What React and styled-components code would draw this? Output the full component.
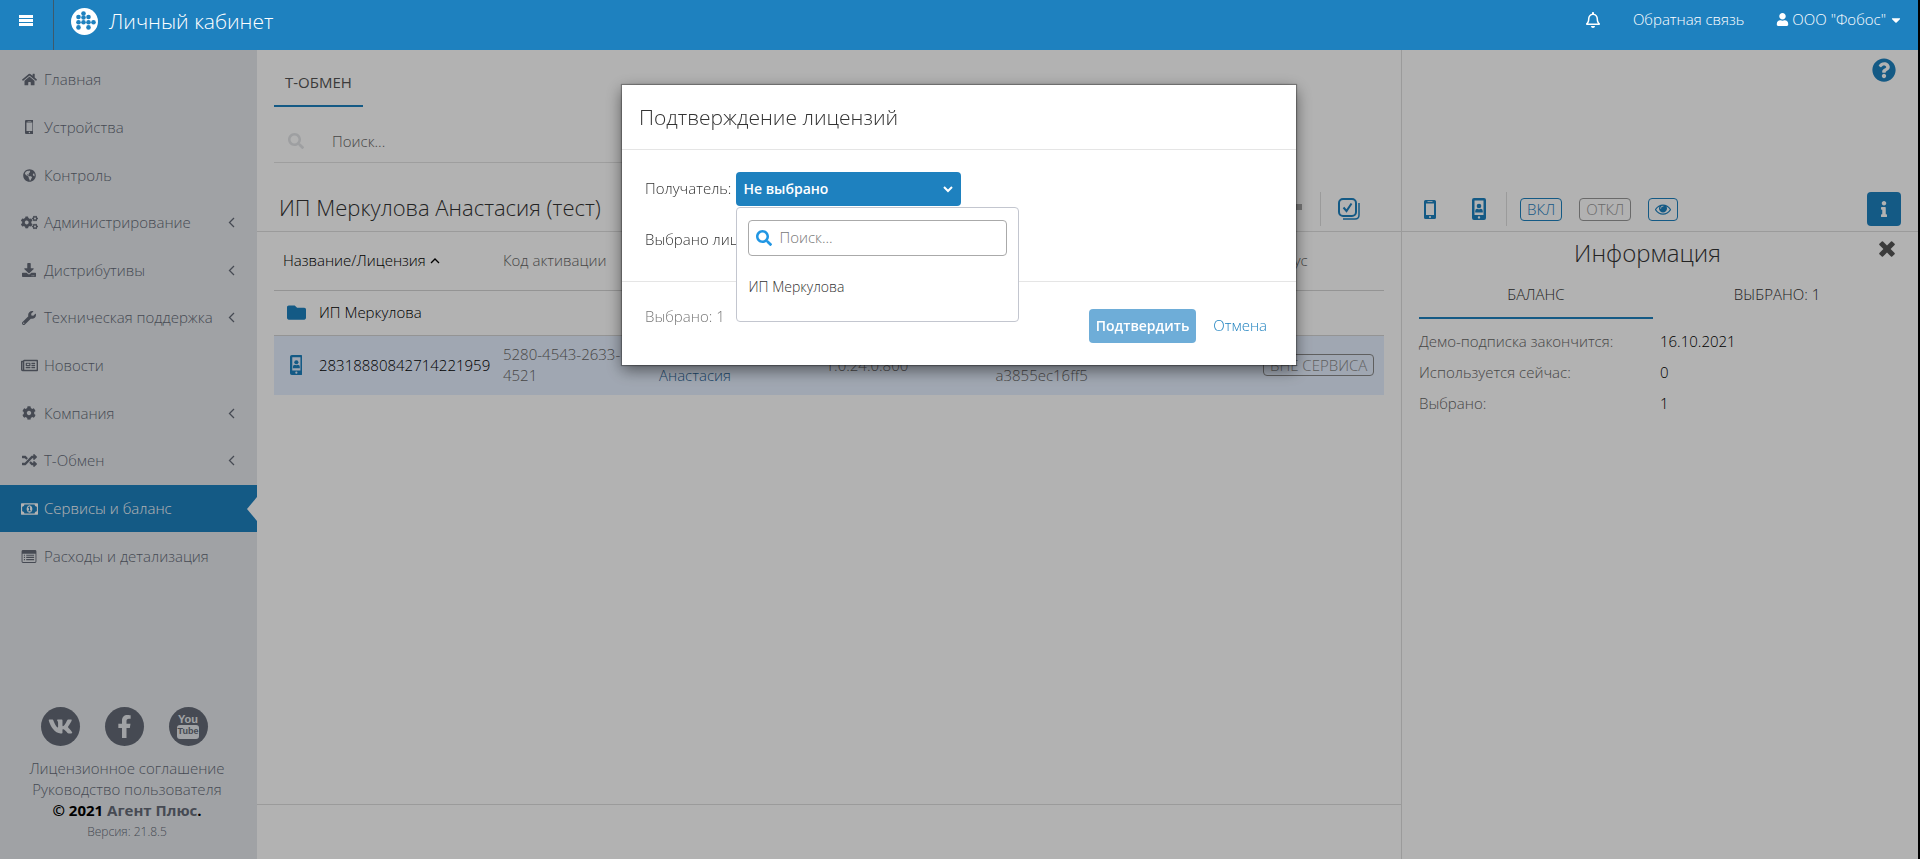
import React, { useState } from "react";
import styled, { createGlobalStyle } from "styled-components";
import {
  FaHome,
  FaGlobeAmericas,
  FaCogs,
  FaDownload,
  FaWrench,
  FaRegNewspaper,
  FaCog,
  FaRandom,
  FaSearch,
  FaUser,
  FaCaretDown,
  FaRegBell,
  FaQuestionCircle,
  FaInfo,
  FaFolder,
  FaVk,
  FaFacebookF,
} from "react-icons/fa";

const BarsIcon = () => (
  <svg width="14" height="12" viewBox="0 0 14 12" fill="currentColor">
    <rect width="14" height="3" />
    <rect y="4" width="14" height="3" />
    <rect y="8" width="14" height="3" />
  </svg>
);

const LogoIcon = () => (
  <svg width="27" height="27" viewBox="0 0 27 27">
    <circle cx="13.5" cy="13.5" r="13.5" fill="#fff" />
    <g fill="#1e81bf">
      {[
        [12.5, 5.5],
        [7.5, 9],
        [12.5, 9.5],
        [17.5, 9],
        [7.5, 14.2],
        [12.5, 14.2],
        [17.5, 14.2],
        [22.5, 14.2],
        [7.5, 19.4],
        [17.5, 19.4],
      ].map(([x, y]) => (
        <circle key={`${x}-${y}`} cx={x} cy={y} r="2.3" />
      ))}
    </g>
  </svg>
);

const angles = {
  left: "M6 1L1.500 5.500 6 10",
  up: "M1 7l4-4 4 4",
  down: "M1 3l4 4 4-4",
};

const Angle = ({ to, weight = 1.3 }) => (
  <svg
    width={to === "left" ? 7 : 10}
    height={to === "left" ? 11 : 10}
    fill="none"
    stroke="currentColor"
    strokeWidth={weight}
  >
    <path d={angles[to]} />
  </svg>
);

const MoneyIcon = () => (
  <svg width="17" height="16" viewBox="128 0 1920 1792" fill="currentColor">
    <path d="M896 1152h384v-96h-128v-448h-114l-148 137 77 80q42-37 55-57h2v288h-128v96zm512-256q0 70-21 142t-59.5 134-101.5 101-138 39-138-39-101.5-101-59.5-134-21-142 21-142 59.5-134 101.5-101 138-39 138 39 101.5 101 59.5 134 21 142zm512 256v-512q-106 0-181-75t-75-181h-1152q0 106-75 181t-181 75v512q106 0 181 75t75 181h1152q0-106 75-181t181-75zm128-832v1152q0 26-19 45t-45 19h-1792q-26 0-45-19t-19-45v-1152q0-26 19-45t45-19h1792q26 0 45 19t19 45z" />
  </svg>
);

const ListIcon = () => (
  <svg width="16" height="13" viewBox="0 0 16 14" fill="currentColor">
    <path
      fillRule="evenodd"
      d="M1.5 0h13Q16 0 16 1.500v11Q16 14 14.500 14h-13Q0 14 0 12.500v-11Q0 0 1.500 0zM1 4v8.500q0 .5.5.5h13q.5 0 .5-.5V4z"
    />
    <path d="M2.500 5h1.200v1.200H2.500zM5 5h8.500v1.200H5zM2.500 7.400h1.200v1.200H2.500zM5 7.400h8.500v1.200H5zM2.500 9.800h1.200V11H2.500zM5 9.800h8.500V11H5z" />
  </svg>
);

const EyeIcon = () => (
  <svg width="16" height="16" viewBox="0 0 1792 1792" fill="currentColor">
    <path d="M1664 960q-152-236-381-353 61 104 61 225 0 185-131.5 316.5t-316.5 131.5-316.5-131.5-131.5-316.5q0-121 61-225-229 117-381 353 133 205 333.5 326.5t434.5 121.5 434.5-121.5 333.5-326.5zm-720-384q0-20-14-34t-34-14q-125 0-214.5 89.5t-89.5 214.5q0 20 14 34t34 14 34-14 14-34q0-86 61-147t147-61q20 0 34-14t14-34zm848 384q0 34-20 69-140 230-376.5 368.5t-499.5 138.5-499.5-139-376.5-368q-20-35-20-69t20-69q140-229 376.5-368t499.5-139 499.5 139 376.5 368q20 35 20 69z" />
  </svg>
);

const PhoneIcon = ({ height = 19 }) => (
  <svg height={height} viewBox="0 0 12 19" fill="currentColor">
    <path
      fillRule="evenodd"
      d="M1.500 0h9Q12 0 12 1.500v16q0 1.500-1.500 1.500h-9Q0 19 0 17.500v-16Q0 0 1.500 0zM2 3.500V15h8V3.500zM3.500 1.300v.8h5v-.8zM6 16a1 1 0 1 0 0 2 1 1 0 1 0 0-2z"
    />
  </svg>
);

const PhoneUserIcon = ({ height = 22 }) => (
  <svg height={height} viewBox="0 0 14 22" fill="currentColor">
    <path
      fillRule="evenodd"
      d="M2 0h10q2 0 2 2v18q0 2-2 2H2q-2 0-2-2V2Q0 0 2 0zM2.500 2.500V17h9V2.500zM7 18.200a1.200 1.200 0 1 0 0 2.400 1.200 1.200 0 1 0 0-2.400z"
    />
    <circle cx="7" cy="8" r="2.300" />
    <path d="M3.200 14.500v-1.500q0-2.300 2.300-2.300 1.500 1 3 0 2.300 0 2.300 2.300v1.500z" />
  </svg>
);

const SelectAllIcon = () => (
  <svg width="22" height="22" viewBox="0 0 22 22" fill="none" stroke="currentColor">
    <rect x="1" y="1" width="17" height="17" rx="4" strokeWidth="2" />
    <path d="M5.500 9.500l3 3.500 5-7.500" strokeWidth="2" />
    <path d="M5 21h12q4 0 4-4V5" strokeWidth="1.500" />
  </svg>
);

const CloseIcon = () => (
  <svg width="16" height="16" viewBox="0 0 16 16" fill="currentColor">
    <path d="M4 .4L8 4.400 12 .4q.6-.5 1.200 0l2.400 2.400q.5.600 0 1.200l-4 4 4 4q.5.600 0 1.200l-2.400 2.400q-.6.500-1.200 0l-4-4-4 4q-.6.500-1.200 0L.4 13.200q-.5-.6 0-1.200l4-4-4-4q-.5-.6 0-1.200L2.800.4q.6-.5 1.200 0z" />
  </svg>
);

const menu = [
  { label: "Главная", icon: <FaHome size={15} /> },
  { label: "Устройства", icon: <PhoneIcon height={14} /> },
  { label: "Контроль", icon: <FaGlobeAmericas size={13} /> },
  { label: "Администрирование", icon: <FaCogs size={17} />, nested: true },
  { label: "Дистрибутивы", icon: <FaDownload size={14} />, nested: true },
  { label: "Техническая поддержка", icon: <FaWrench size={14} />, nested: true },
  { label: "Новости", icon: <FaRegNewspaper size={17} /> },
  { label: "Компания", icon: <FaCog size={14} />, nested: true },
  { label: "Т-Обмен", icon: <FaRandom size={15} />, nested: true },
  { label: "Сервисы и баланс", icon: <MoneyIcon />, active: true },
  { label: "Расходы и детализация", icon: <ListIcon /> },
];

const balance = [
  ["Демо-подписка закончится:", "16.10.2021"],
  ["Используется сейчас:", "0"],
  ["Выбрано:", "1"],
];

function Sidebar() {
  return (
    <Aside>
      <Menu>
        {menu.map(({ label, icon, nested, active }) => (
          <MenuItem key={label} href="#" $active={active}>
            <MenuIcon>{icon}</MenuIcon>
            <span>{label}</span>
            {nested && <Angle to="left" />}
          </MenuItem>
        ))}
      </Menu>
      <AsideFooter>
        <Socials>
          <Social href="#" aria-label="ВКонтакте">
            <FaVk size={25} />
          </Social>
          <Social href="#" aria-label="Facebook">
            <FaFacebookF size={23} />
          </Social>
          <Social href="#">
            <span>You</span>
            <Tube>Tube</Tube>
          </Social>
        </Socials>
        <a href="#">Лицензионное соглашение</a>
        <a href="#">Руководство пользователя</a>
        <Copyright>
          © 2021 <a href="#">Агент Плюс</a>.
        </Copyright>
        <Version>Версия: 21.8.5</Version>
      </AsideFooter>
    </Aside>
  );
}

function Licenses() {
  return (
    <Main>
      <Top>
        <Tab>Т-ОБМЕН</Tab>
        <SearchRow>
          <FaSearch />
          <input type="text" placeholder="Поиск..." aria-label="Поиск" />
        </SearchRow>
      </Top>
      <TitleBar>
        <Title>ИП Меркулова Анастасия (тест)</Title>
        <Dash />
        <Divider />
        <IconButton aria-label="Выбрать все">
          <SelectAllIcon />
        </IconButton>
      </TitleBar>
      <TableWrap>
        <Table>
          <colgroup>
            <Col $width="220px" />
            <Col $width="156px" />
            <Col $width="15%" />
            <Col $width="170px" />
            <Col />
            <Col $width="130px" />
          </colgroup>
          <thead>
            <tr>
              <Th $sorted>
                Название/Лицензия <Angle to="up" />
              </Th>
              <Th>Код активации</Th>
              <Th>Клиент</Th>
              <Th>Версия</Th>
              <Th>Устройство</Th>
              <Th>Статус</Th>
            </tr>
          </thead>
          <tbody>
            <tr>
              <Td colSpan={6}>
                <Name>
                  <FaFolder size={19} />
                  ИП Меркулова
                </Name>
              </Td>
            </tr>
            <SelectedRow>
              <Td>
                <Name>
                  <PhoneUserIcon height={20} />
                  28318880842714221959
                </Name>
              </Td>
              <Td>5280-4543-2633-4521</Td>
              <Td>
                <a href="#">
                  Меркулова
                  <br />
                  Анастасия
                </a>
              </Td>
              <Td>1.0.24.0.800</Td>
              <Td>
                97b1-4c02-
                <br />
                a3855ec16ff5
              </Td>
              <Td>
                <Badge>ВНЕ СЕРВИСА</Badge>
              </Td>
            </SelectedRow>
          </tbody>
        </Table>
      </TableWrap>
      <BottomBar />
    </Main>
  );
}

function InfoPanel() {
  return (
    <Panel>
      <HelpRow>
        <IconButton aria-label="Помощь">
          <FaQuestionCircle size={24} />
        </IconButton>
      </HelpRow>
      <PanelTools>
        <IconButton aria-label="Устройство">
          <PhoneIcon />
        </IconButton>
        <IconButton aria-label="Пользователь устройства">
          <PhoneUserIcon />
        </IconButton>
        <Divider />
        <Outlined>ВКЛ</Outlined>
        <Outlined disabled>ОТКЛ</Outlined>
        <Outlined aria-label="Показать">
          <EyeIcon />
        </Outlined>
        <InfoButton aria-label="Информация">
          <FaInfo size={16} />
        </InfoButton>
      </PanelTools>
      <PanelHead>
        <h2>Информация</h2>
        <CloseButton aria-label="Закрыть">
          <CloseIcon />
        </CloseButton>
      </PanelHead>
      <PanelTabs>
        <PanelTab $active>БАЛАНС</PanelTab>
        <PanelTab>ВЫБРАНО: 1</PanelTab>
      </PanelTabs>
      <Balance>
        {balance.map(([name, value]) => (
          <React.Fragment key={name}>
            <dt>{name}</dt>
            <dd>{value}</dd>
          </React.Fragment>
        ))}
      </Balance>
    </Panel>
  );
}

function ConfirmModal() {
  const [open, setOpen] = useState(true);
  const [query, setQuery] = useState("");

  return (
    <Overlay>
      <Modal role="dialog" aria-labelledby="modal-title">
        <ModalHeader id="modal-title">Подтверждение лицензий</ModalHeader>
        <ModalBody>
          <Field>
            <span>Получатель:</span>
            <Picker>
              <PickerButton onClick={() => setOpen(!open)}>
                Не выбрано <Angle to="down" weight={2} />
              </PickerButton>
              {open && (
                <Dropdown>
                  <DropdownSearch>
                    <FaSearch />
                    <input
                      type="text"
                      placeholder="Поиск..."
                      aria-label="Поиск получателя"
                      value={query}
                      onChange={(e) => setQuery(e.target.value)}
                    />
                  </DropdownSearch>
                  <Option>ИП Меркулова</Option>
                </Dropdown>
              )}
            </Picker>
          </Field>
          <Field>Выбрано лицензий: 1</Field>
        </ModalBody>
        <ModalFooter>
          <Count>Выбрано: 1</Count>
          <Confirm>Подтвердить</Confirm>
          <Cancel>Отмена</Cancel>
        </ModalFooter>
      </Modal>
    </Overlay>
  );
}

function App() {
  return (
    <Page>
      <GlobalStyle />
      <Header>
        <MenuButton aria-label="Меню">
          <BarsIcon />
        </MenuButton>
        <Brand href="#">
          <LogoIcon />
          Личный кабинет
        </Brand>
        <HeaderRight>
          <HeaderButton aria-label="Уведомления">
            <FaRegBell size={16} />
          </HeaderButton>
          <a href="#">Обратная связь</a>
          <HeaderButton>
            <FaUser size={13} />
            <span>ООО "Фобос"</span>
            <FaCaretDown size={14} />
          </HeaderButton>
        </HeaderRight>
      </Header>
      <Body>
        <Sidebar />
        <Licenses />
        <InfoPanel />
      </Body>
      <ConfirmModal />
    </Page>
  );
}

export default App;

const GlobalStyle = createGlobalStyle`
  * {
    box-sizing: border-box;
  }
  body {
    margin: 0;
    font-family: "Open Sans", sans-serif;
    font-size: 15px;
    font-weight: 300;
    line-height: 21px;
    color: #333;
    background: #fff;
  }
  button,
  input {
    font: inherit;
    color: inherit;
    border: none;
    background: none;
    padding: 0;
    outline: none;
  }
  button {
    cursor: pointer;
  }
  a {
    color: inherit;
    text-decoration: none;
  }
`;

const Page = styled.div`
  display: flex;
  flex-direction: column;
  min-height: 100vh;
  border-right: 2px solid #000;
`;

const Header = styled.header`
  display: flex;
  height: 50px;
  position: relative;
  z-index: 2;
  color: #fff;
  background: #1e81bf;
`;

const MenuButton = styled.button`
  display: flex;
  justify-content: center;
  width: 54px;
  padding: 15px 2px 0 0;
  border-right: 1px solid #3d5a6c;
`;

const Brand = styled.a`
  display: flex;
  align-items: center;
  gap: 11px;
  height: 43px;
  padding-left: 17px;
  font-size: 21px;
`;

const HeaderRight = styled.div`
  display: flex;
  align-items: center;
  gap: 32px;
  height: 39px;
  margin-left: auto;
  padding-right: 15px;
`;

const HeaderButton = styled.button`
  display: flex;
  align-items: center;
  gap: 3px;
`;

const Body = styled.div`
  flex: 1;
  display: grid;
  grid-template-columns: 257px minmax(0, 1fr) 517px;
`;

const Aside = styled.aside`
  display: flex;
  flex-direction: column;
  justify-content: space-between;
  color: #656b78;
  background: #e6e9ed;
`;

const Menu = styled.nav`
  display: grid;
  grid-auto-rows: 1fr;
  height: 524px;
  margin-top: 6px;
`;

const MenuItem = styled.a`
  display: flex;
  align-items: center;
  position: relative;
  padding: 0 22px 0 20px;
  color: ${(props) => (props.$active ? "#fff" : "#656b78")};
  background: ${(props) => (props.$active ? "#1e81bf" : "transparent")};

  > svg {
    margin-left: auto;
  }

  &::after {
    content: "";
    display: ${(props) => (props.$active ? "block" : "none")};
    position: absolute;
    right: 0;
    border: 12px solid transparent;
    border-width: 12px 10px 12px 0;
    border-right-color: #fff;
  }
`;

const MenuIcon = styled.span`
  display: flex;
  justify-content: center;
  width: 18px;
  margin-right: 6px;
`;

const AsideFooter = styled.footer`
  display: flex;
  flex-direction: column;
  align-items: center;
  padding: 0 3px 16px 0;
`;

const Socials = styled.div`
  display: flex;
  gap: 25px;
  margin: 0 6px 12px 0;
`;

const Social = styled.a`
  display: flex;
  flex-direction: column;
  align-items: center;
  justify-content: center;
  width: 39px;
  height: 39px;
  border-radius: 50%;
  color: #e6e9ed;
  background: #656b78;
  font: bold 11px/11px "Liberation Sans Narrow", sans-serif;
`;

const Tube = styled.span`
  padding: 1px 1px 2px;
  border-radius: 3px;
  font-size: 9px;
  color: #656b78;
  background: #e6e9ed;
`;

const Copyright = styled.div`
  font-weight: 700;
  color: #000;

  a {
    color: #656b78;
  }
`;

const Version = styled.div`
  font-size: 12px;
  line-height: 22px;
`;

const Main = styled.main`
  display: flex;
  flex-direction: column;
`;

const Top = styled.div`
  height: 113px;
  padding: 10px 17px 0;
`;

const Tab = styled.button`
  padding: 12px 11px 12px;
  border-bottom: 2px solid #1e81bf;
  font-weight: 400;
  color: #555;
`;

const SearchRow = styled.label`
  display: flex;
  align-items: center;
  gap: 28px;
  width: 60%;
  height: 43px;
  margin-top: 13px;
  padding-left: 14px;
  border-bottom: 1px solid #e2e2e2;
  color: #e2e4e7;

  svg {
    width: 16px;
    height: 16px;
  }
  input {
    flex: 1;
    color: #333;
  }
  input::placeholder {
    color: #666;
    opacity: 1;
  }
`;

const TitleBar = styled.div`
  display: flex;
  align-items: center;
  height: 69px;
  padding: 24px 41px 0 22px;
  border-bottom: 1px solid #dfdfdf;
`;

const Title = styled.h1`
  margin: 0 auto 0 0;
  padding-bottom: 4px;
  font-size: 22px;
  line-height: 30px;
  font-weight: 300;
`;

const Dash = styled.span`
  width: 16px;
  height: 6px;
  margin-bottom: 4px;
  background: #aaa;
`;

const Divider = styled.span`
  width: 1px;
  height: 34px;
  margin: 0 0 0 18px;
  background: #dfdfdf;
`;

const IconButton = styled.button`
  display: flex;
  margin-left: 17px;
  color: #1e81bf;
`;

const TableWrap = styled.div`
  flex: 1;
  padding: 0 17px;
`;

const Table = styled.table`
  width: 100%;
  table-layout: fixed;
  border-collapse: collapse;
`;

const Col = styled.col`
  width: ${(props) => props.$width || "auto"};
`;

const Th = styled.th`
  height: 58px;
  padding: 0 9px;
  text-align: left;
  font-weight: 300;
  white-space: nowrap;
  color: ${(props) => (props.$sorted ? "#000" : "#666")};
  border-bottom: 1px solid #d4d4d4;
`;

const Td = styled.td`
  height: 45px;
  padding: 0 9px;
  color: #666;

  a {
    color: #2a6496;
  }
`;

const SelectedRow = styled.tr`
  background: #e6f0ff;
  border-top: 1px solid #d4d4d4;

  td {
    height: 60px;
  }
`;

const Name = styled.div`
  display: grid;
  grid-template-columns: 26px auto;
  justify-items: center;
  justify-content: start;
  align-items: center;
  column-gap: 10px;
  color: #000;

  svg {
    color: #1e81bf;
  }
`;

const Badge = styled.span`
  display: inline-block;
  padding: 0 6px;
  border: 1px solid #888;
  border-radius: 4px;
  line-height: 20px;
  white-space: nowrap;
  color: #888;
`;

const BottomBar = styled.div`
  height: 55px;
  border-top: 1px solid #dfdfdf;
`;

const Panel = styled.section`
  border-left: 1px solid #dfdfdf;
`;

const HelpRow = styled.div`
  display: flex;
  justify-content: flex-end;
  align-items: flex-start;
  height: 113px;
  padding: 8px 22px 0 0;
`;

const PanelTools = styled.div`
  display: flex;
  align-items: center;
  height: 69px;
  padding: 24px 17px 0 5px;
  border-bottom: 1px solid #dfdfdf;

  ${Divider} {
    margin: 0 -4px 0 20px;
  }
  ${IconButton} + ${IconButton} {
    margin-left: 36px;
  }
`;

const Outlined = styled.button`
  display: flex;
  align-items: center;
  height: 23px;
  margin-left: 17px;
  padding: 0 6px;
  border: 1px solid currentColor;
  border-radius: 4px;
  color: ${(props) => (props.disabled ? "#999" : "#1e81bf")};
`;

const InfoButton = styled.button`
  display: flex;
  align-items: center;
  justify-content: center;
  width: 34px;
  height: 34px;
  margin-left: auto;
  border-radius: 4px;
  color: #fff;
  background: #1e81bf;
`;

const PanelHead = styled.div`
  display: flex;
  align-items: flex-start;
  padding: 5px 23px 0 0;

  h2 {
    flex: 1;
    margin: 0;
    padding-left: 14px;
    text-align: center;
    font-size: 24px;
    line-height: 31px;
    font-weight: 300;
  }
`;

const CloseButton = styled.button`
  display: flex;
  padding-top: 4px;
  color: #555;
`;

const PanelTabs = styled.div`
  display: grid;
  grid-template-columns: 1fr 1fr;
  gap: 7px;
  margin: 6px 24px 10px 17px;
`;

const PanelTab = styled.button`
  height: 45px;
  padding-bottom: 2px;
  border-bottom: 2px solid ${(props) => (props.$active ? "#1e81bf" : "transparent")};
`;

const Balance = styled.dl`
  display: grid;
  grid-template-columns: 1fr 1fr;
  gap: 10px 7px;
  margin: 12px 24px 0 17px;
  color: #666;

  dd {
    margin: 0;
    color: #000;
  }
`;

const Overlay = styled.div`
  position: fixed;
  inset: 0 2px 0 0;
  z-index: 1;
  padding: 85px 20px 0;
  background: rgba(0, 0, 0, 0.3);
`;

const Modal = styled.div`
  max-width: 674px;
  margin: 0 auto;
  background: #fff;
  box-shadow: 0 0 1px 1px rgba(0, 0, 0, 0.3), 0 5px 15px rgba(0, 0, 0, 0.5);
`;

const ModalHeader = styled.h2`
  margin: 0;
  padding: 17px 17px 16px;
  border-bottom: 1px solid #e5e5e5;
  font-size: 21px;
  line-height: 31px;
  font-weight: 300;
`;

const ModalBody = styled.div`
  display: flex;
  flex-direction: column;
  gap: 18px;
  padding: 22px 23px 25px;
`;

const Field = styled.div`
  display: flex;
  align-items: center;
  gap: 5px;
  height: 33px;
`;

const Picker = styled.div`
  position: relative;
`;

const PickerButton = styled.button`
  display: flex;
  align-items: center;
  justify-content: space-between;
  width: 225px;
  height: 34px;
  padding: 0 8px 0 7px;
  border-radius: 4px;
  font-weight: 600;
  font-size: 14px;
  color: #fff;
  background: #1e81bf;
`;

const Dropdown = styled.div`
  position: absolute;
  top: 35px;
  left: 0;
  width: 283px;
  height: 115px;
  padding: 12px 11px;
  border: 1px solid #c3c6cf;
  border-radius: 4px;
  background: #fff;
`;

const DropdownSearch = styled.label`
  display: flex;
  align-items: center;
  gap: 7px;
  height: 36px;
  padding: 0 7px;
  border: 1px solid #aaa;
  border-radius: 4px;

  svg {
    width: 16px;
    height: 16px;
    color: #2196e3;
  }
  input {
    flex: 1;
    min-width: 0;
  }
  input::placeholder {
    color: #777;
    opacity: 1;
  }
`;

const Option = styled.button`
  margin-top: 20px;
  font-size: 14px;
`;

const ModalFooter = styled.div`
  display: flex;
  align-items: center;
  padding: 20px 29px 16px 23px;
  height: 84px;
  border-top: 1px solid #e5e5e5;
`;

const Count = styled.span`
  margin-right: auto;
  padding-bottom: 18px;
  color: #777;
`;

const Confirm = styled.button`
  height: 34px;
  padding: 0 7px;
  border-radius: 4px;
  font-weight: 600;
  font-size: 14px;
  color: #fff;
  background: #6eadd8;
`;

const Cancel = styled.button`
  margin-left: 17px;
  color: #1e81bf;
`;
